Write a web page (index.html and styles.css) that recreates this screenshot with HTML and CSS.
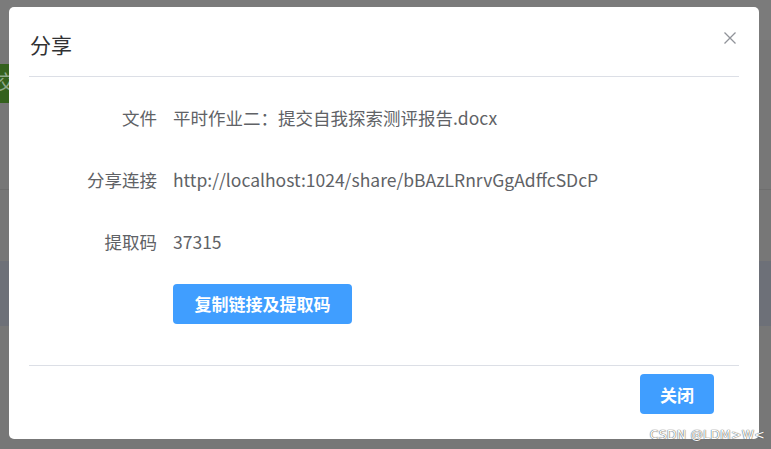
FILE: index.html
```html
<!DOCTYPE html>
<html lang="zh-CN">
<head>
    <meta charset="UTF-8">
    <meta name="viewport" content="width=device-width, initial-scale=1.0">
    <title>分享</title>
    <link rel="stylesheet" href="styles.css">
</head>
<body>

<!-- 背后的页面（被遮罩盖住） -->
<div class="page">
    <div class="page-head"></div>
    <div class="page-toolbar">
        <span class="page-btn">交</span>
    </div>
    <div class="page-line"></div>
    <div class="page-row"></div>
</div>

<!-- 遮罩 + 分享对话框 -->
<div class="overlay">
    <div class="dialog">
        <div class="dialog-header">
            <span class="dialog-title">分享</span>
            <button class="dialog-close" aria-label="关闭">
                <svg width="12" height="12" viewBox="0 0 12 12">
                    <path d="M0.5 0.5 L11.5 11.5 M11.5 0.5 L0.5 11.5" stroke="#909399" stroke-width="1.3" fill="none"/>
                </svg>
            </button>
        </div>

        <div class="dialog-body">
            <div class="form-item">
                <label class="form-label">文件</label>
                <div class="form-value">平时作业二：提交自我探索测评报告.docx</div>
            </div>
            <div class="form-item">
                <label class="form-label">分享连接</label>
                <div class="form-value">http://localhost:1024/share/bBAzLRnrvGgAdffcSDcP</div>
            </div>
            <div class="form-item">
                <label class="form-label">提取码</label>
                <div class="form-value">37315</div>
            </div>
            <div class="form-item">
                <label class="form-label"></label>
                <div class="form-value">
                    <button class="btn btn-primary btn-copy">复制链接及提取码</button>
                </div>
            </div>
        </div>

        <div class="dialog-footer">
            <button class="btn btn-primary btn-close">关闭</button>
        </div>
    </div>

    <div class="watermark">CSDN @LDM&gt;W&lt;</div>
</div>

</body>
</html>
```

FILE: styles.css
```css
* {
    box-sizing: border-box;
}
body {
    margin: 0;
    padding: 0;
    font-family: "Noto Sans CJK SC", "Noto Sans", sans-serif;
    background-color: #777777;
    overflow: hidden;
}

/* 背后的页面 */
.page {
    height: 449px;
}
.page-head {
    height: 40px;
    background-color: #7b7b7b;
}
.page-toolbar {
    height: 100px;
    padding-top: 24px;
}
.page-btn {
    display: block;
    width: 9px;
    height: 39px;
    background-color: #34611d;
    color: #8fa88a;
    font-size: 20px;
    line-height: 36px;
    text-indent: -4px;
    overflow: hidden;
}
.page-line {
    height: 50px;
    border-bottom: 1px solid #6e6e6e;
}
.page-row {
    margin-top: 71px;
    height: 65px;
    background-color: #6d7078;
}

/* 遮罩 */
.overlay {
    position: absolute;
    inset: 0;
}
.dialog {
    position: absolute;
    left: 9px;
    top: 7px;
    width: 750px;
    height: 432px;
    background-color: #ffffff;
    border-radius: 5px;
}
.dialog-header {
    display: flex;
    align-items: center;
    justify-content: space-between;
    height: 70px;
    margin: 0 20px;
    border-bottom: 1px solid #dcdfe6;
}
.dialog-title {
    margin-left: 1px;
    font-size: 21px;
    color: #303133;
    line-height: 24px;
    padding-top: 4px;
}
.dialog-close {
    border: none;
    background: none;
    padding: 0;
    margin-right: 3px;
    margin-bottom: 8px;
    cursor: pointer;
    display: flex;
}

.dialog-body {
    margin: 0 20px;
    padding-top: 20px;
    border-bottom: 1px solid #dcdfe6;
    height: 289px;
}
.form-item {
    display: flex;
    align-items: center;
    height: 40px;
    margin-bottom: 22px;
}
.form-label {
    width: 144px;
    padding-right: 16px;
    text-align: right;
    font-size: 17.5px;
    color: #606266;
}
.form-value {
    font-size: 17.5px;
    color: #606266;
}

.btn {
    border: none;
    border-radius: 4px;
    font-family: inherit;
    font-size: 17px;
    font-weight: bold;
    height: 40px;
    cursor: pointer;
}
.btn-primary {
    background-color: #409eff;
    color: #ffffff;
}
.btn-copy {
    width: 179px;
    display: block;
    margin-top: 1px;
}

.dialog-footer {
    display: flex;
    justify-content: flex-end;
    padding: 8px 45px 0 0;
}
.btn-close {
    width: 74px;
}

.watermark {
    position: absolute;
    right: 6px;
    bottom: 7px;
    font-family: "DejaVu Sans", sans-serif;
    font-size: 12.5px;
    letter-spacing: 0.2px;
    color: #ffffff;
    text-shadow: 0 0 1px #555, 0 0 1px #555;
}
```
